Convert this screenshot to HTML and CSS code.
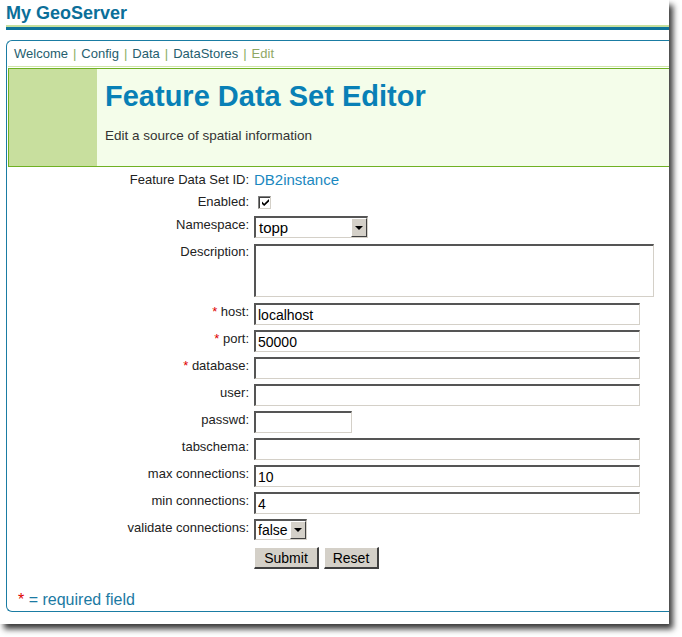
FILE: index.html
```html
<!DOCTYPE html>
<html>
<head>
<meta charset="utf-8">
<title>My GeoServer</title>
<link rel="stylesheet" href="styles.css">
</head>
<body>
<div class="window">
  <h1 class="site-title">My GeoServer</h1>
  <div class="top-rule"></div>
  <div class="panel">
    <nav class="crumbs">
      <a href="#">Welcome</a><span class="sep">|</span><a href="#">Config</a><span class="sep">|</span><a href="#">Data</a><span class="sep">|</span><a href="#">DataStores</a><span class="sep">|</span><span class="current">Edit</span>
    </nav>
    <div class="hint-line"></div>
    <div class="banner">
      <div class="banner-side"></div>
      <div class="banner-body">
        <h2 class="banner-title">Feature Data Set Editor</h2>
        <p class="banner-sub">Edit a source of spatial information</p>
      </div>
    </div>
    <form class="editor">
      <label class="lbl row-id">Feature Data Set ID:</label>
      <div class="fld row-id"><span class="ds-id">DB2instance</span></div>

      <label class="lbl row-en">Enabled:</label>
      <div class="fld row-en"><span class="check"><svg width="9" height="9" viewBox="0 0 9 9"><path d="M1 3.5 L3.2 5.7 L8 1 L8 3.4 L3.2 8.1 L1 5.9 Z" fill="#000"/></svg></span></div>

      <label class="lbl row-ns">Namespace:</label>
      <div class="fld row-ns"><div class="dd dd-ns"><span class="dd-val">topp</span><span class="dd-btn"><span class="tri"></span></span></div></div>

      <label class="lbl row-desc">Description:</label>
      <div class="fld row-desc"><textarea class="box area"></textarea></div>

      <label class="lbl row-in"><span class="req">*</span> host:</label>
      <div class="fld row-in"><input class="box wide" type="text" value="localhost"></div>

      <label class="lbl row-in"><span class="req">*</span> port:</label>
      <div class="fld row-in"><input class="box wide" type="text" value="50000"></div>

      <label class="lbl row-in"><span class="req">*</span> database:</label>
      <div class="fld row-in"><input class="box wide" type="text" value=""></div>

      <label class="lbl row-in">user:</label>
      <div class="fld row-in"><input class="box wide" type="text" value=""></div>

      <label class="lbl row-in">passwd:</label>
      <div class="fld row-in"><input class="box short" type="password" value=""></div>

      <label class="lbl row-in">tabschema:</label>
      <div class="fld row-in"><input class="box wide" type="text" value=""></div>

      <label class="lbl row-in">max connections:</label>
      <div class="fld row-in"><input class="box wide" type="text" value="10"></div>

      <label class="lbl row-in">min connections:</label>
      <div class="fld row-in"><input class="box wide" type="text" value="4"></div>

      <label class="lbl row-in">validate connections:</label>
      <div class="fld row-in"><div class="dd dd-val-sel"><span class="dd-val">false</span><span class="dd-btn"><span class="tri"></span></span></div></div>

      <div class="lbl row-btn"></div>
      <div class="fld row-btn buttons"><button type="button" class="btn btn-submit">Submit</button><button type="button" class="btn btn-reset">Reset</button></div>
    </form>
    <p class="note"><span class="req">*</span> = required field</p>
  </div>
</div>
</body>
</html>
```

FILE: styles.css
```css
html, body {
  margin: 0;
  padding: 0;
  background: #ffffff;
}

html {
  height: 637px;
}

body {
  height: 637px;
  font-family: "Liberation Sans", Arial, sans-serif;
  color: #222;
}

.window {
  width: 669px;
  height: 624px;
  background: #ffffff;
  overflow: hidden;
  box-shadow: 4px 5px 6px rgba(0, 0, 0, 0.78);
}

.site-title {
  margin: 0;
  padding: 2px 0 0 6px;
  font-size: 18px;
  line-height: 22px;
  font-weight: bold;
  color: #0b6f99;
}

.top-rule {
  margin: 1px 0 0 6px;
  height: 0;
  border-top: 2px solid #c6df9c;
  border-bottom: 3px solid #0e739a;
}

.panel {
  margin: 10px 0 0 6px;
  width: 720px;
  border: 1px solid #1a7ca3;
  border-right: none;
  border-radius: 6px 0 0 6px;
  padding: 0;
}

.crumbs {
  padding: 3px 0 0 7px;
  height: 20px;
  font-size: 13px;
  line-height: 20px;
}

.crumbs a {
  color: #255e6e;
  text-decoration: none;
}

.crumbs .sep {
  color: #8aae63;
  margin: 0 5px;
}

.crumbs .current {
  color: #8fa864;
}

.hint-line {
  margin: 2px 0 0 1px;
  height: 1px;
  background: #cfe5a9;
}

.banner {
  margin: 1px 0 0 1px;
  height: 97px;
  border: 1px solid #6fb123;
  background: #f4fdea;
  display: flex;
}

.banner-side {
  width: 88px;
  background: #c8df9e;
  flex: none;
}

.banner-body {
  padding: 11px 0 0 8px;
}

.banner-title {
  margin: 0;
  font-size: 29px;
  line-height: 32px;
  font-weight: bold;
  color: #0880b6;
}

.banner-sub {
  margin: 16px 0 0 0;
  font-size: 13.5px;
  line-height: 16px;
  color: #333;
}

.editor {
  margin: 1px 0 0 0;
  display: grid;
  grid-template-columns: 242px 400px;
  column-gap: 5px;
  grid-template-rows: 23px 22px 28px 59px repeat(9, 27px) 29px;
}

.lbl {
  font-size: 13px;
  line-height: 16px;
  text-align: right;
  color: #222;
  align-self: center;
  white-space: nowrap;
}

.lbl.row-in,
.lbl.row-ns {
  padding-bottom: 4px;
}

.lbl.row-desc {
  align-self: start;
  padding-top: 3px;
}

.fld {
  display: flex;
  align-items: center;
}

.req {
  color: #e00000;
}

.ds-id {
  font-size: 15px;
  line-height: 18px;
  color: #1a88c0;
}

.check {
  margin-left: 4px;
  width: 11px;
  height: 11px;
  border-top: 1px solid #808080;
  border-left: 1px solid #808080;
  border-right: 1px solid #d4d0c8;
  border-bottom: 1px solid #d4d0c8;
  box-shadow: inset 1px 1px 0 #404040;
  background: #fff;
  display: flex;
  align-items: center;
  justify-content: center;
}

.check svg {
  margin: 1px 0 0 1px;
}

.box {
  box-sizing: border-box;
  height: 22px;
  margin: 0;
  padding: 1px 0 0 2px;
  border-top: 2px solid #555;
  border-left: 2px solid #555;
  border-right: 1px solid #d4d0c8;
  border-bottom: 1px solid #d4d0c8;
  background: #fff;
  font-family: "Liberation Sans", Arial, sans-serif;
  font-size: 14px;
  color: #000;
  outline: none;
}

.wide {
  width: 386px;
}

.short {
  width: 98px;
}

.area {
  width: 402px;
  height: 53px;
  resize: none;
  display: block;
}

.dd {
  box-sizing: border-box;
  position: relative;
  height: 22px;
  border-top: 2px solid #555;
  border-left: 2px solid #555;
  border-right: 1px solid #d4d0c8;
  border-bottom: 1px solid #d4d0c8;
  background: #fff;
  display: flex;
  align-items: center;
}

.dd-ns {
  width: 114px;
}

.dd-val-sel {
  width: 53px;
  height: 21px;
}

.dd-val {
  padding-left: 3px;
  font-size: 15px;
  line-height: 18px;
  color: #000;
}

.dd-val-sel .dd-val {
  font-size: 14px;
  padding-left: 2px;
}

.dd-btn {
  position: absolute;
  right: 0;
  top: 0;
  bottom: 0;
  width: 16px;
  box-sizing: border-box;
  background: #d4d0c8;
  border-top: 1px solid #fff;
  border-left: 1px solid #fff;
  border-right: 1px solid #404040;
  border-bottom: 1px solid #404040;
  display: flex;
  align-items: center;
  justify-content: center;
}

.tri {
  width: 0;
  height: 0;
  border-left: 4px solid transparent;
  border-right: 4px solid transparent;
  border-top: 4px solid #000;
}

.buttons {
  align-items: flex-start;
  padding-top: 4px;
  gap: 5px;
}

.btn {
  box-sizing: border-box;
  height: 22px;
  margin: 0;
  padding: 0;
  background: #d4d0c8;
  border-top: 1px solid #fff;
  border-left: 1px solid #fff;
  border-right: 2px solid #404040;
  border-bottom: 2px solid #404040;
  font-family: "Liberation Sans", Arial, sans-serif;
  font-size: 14px;
  color: #000;
}

.btn-submit {
  width: 65px;
}

.btn-reset {
  width: 55px;
}

.note {
  margin: 18px 0 0 0;
  padding: 0 0 1px 11px;
  font-size: 16px;
  line-height: 20px;
  color: #1b7aa3;
}
```
